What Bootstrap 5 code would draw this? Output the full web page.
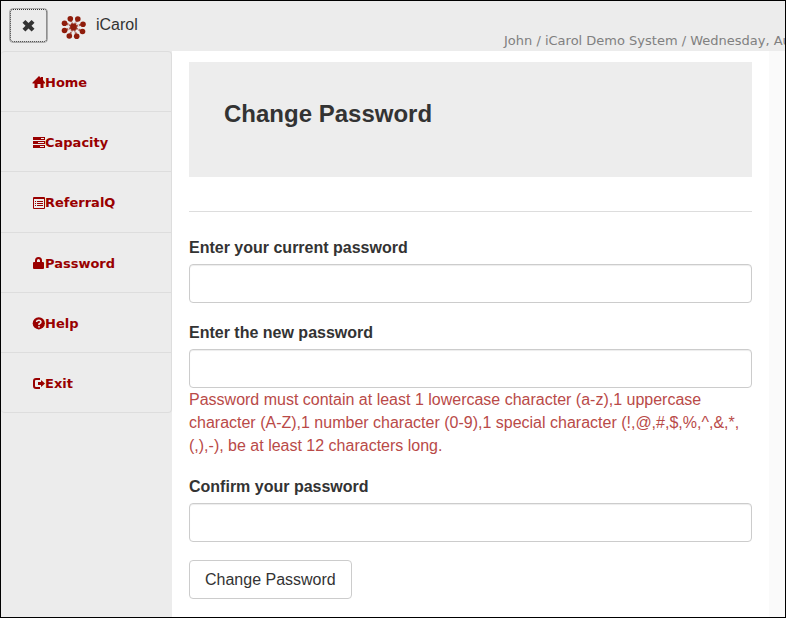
<!DOCTYPE html>
<html lang="en">
<head>
<meta charset="utf-8">
<meta name="viewport" content="width=device-width, initial-scale=1">
<title>iCarol - Change Password</title>
<link href="https://cdn.jsdelivr.net/npm/bootstrap@5.3.0/dist/css/bootstrap.min.css" rel="stylesheet">
<style>
body { font: 16px/23px "Liberation Sans", Arial, sans-serif; color: #333; background: #ececec; }
.app-shell { border: 1px solid #000; }
.top-bar { height: 50px; padding-left: 8px; }
.menu-toggle { width: 39px; height: 35px; margin-top: 7px; padding: 0; background: #ebebeb; border: 1px solid #adadad; border-radius: 4px; outline: 1px dotted #333; outline-offset: -2px; color: #333; }
.brand-link { color: #333; margin: 9px 0 0 13px; gap: 9px; }
.brand-name { line-height: 29px; }
.session-info { flex: 0 0 282px; min-width: 0; padding: 30px 0 0 1px; font: 13px/20px Verdana, "DejaVu Sans", sans-serif; color: #808080; }
.side-col { flex: 0 0 171px; }
.side-menu { --bs-list-group-bg: transparent; --bs-list-group-border-color: #ddd; --bs-list-group-border-radius: 4px; border-radius: 4px; }
.side-menu .list-group-item { height: 60px; padding: 2px 0 0 31px; border-left: 0; color: #900; font: bold 13px/20px Verdana, "DejaVu Sans", sans-serif; }
.side-menu .list-group-item:nth-child(-2n+3) { height: 61px; }
.side-menu svg { width: 13px; height: 13px; }
.main-col { padding: 11px 17px 18px; background: #fff; min-width: 0; }
.right-gutter { flex: 0 0 16px; background: #fafafa; }
.title-panel { background: #ededed; padding: 35px; height: 115px; }
.title-panel h1 { font-size: 24px; line-height: 34px; font-weight: bold; }
.rule-line { margin: 34px 0 24px; border-top: 1px solid #ddd; opacity: 1; }
.field-group { margin-bottom: 18px; }
.field-group label { font-weight: bold; margin-bottom: 5px; display: block; }
.field-group .form-control { height: 39px; border: 1px solid #ccc; border-radius: 4px; box-shadow: inset 0 1px 1px rgba(0,0,0,.075); }
.rule-text { color: #b94a48; }
.submit-btn { height: 39px; padding: 0 15px; border: 1px solid #ccc; border-radius: 4px; color: #333; background: #fff; }
</style>
<script src="https://cdn.jsdelivr.net/npm/bootstrap@5.3.0/dist/js/bootstrap.bundle.min.js" defer></script>
</head>
<body>
<div class="app-shell min-vh-100 d-flex flex-column overflow-hidden">
  <header class="top-bar d-flex align-items-start">
    <button type="button" class="menu-toggle d-flex align-items-center justify-content-center" aria-label="Close menu">
      <svg width="14" height="14" viewBox="0 0 14 14" aria-hidden="true"><path d="M3.400 1 6.500 4.100 9.600 1 12.500 3.800 9.500 6.700 12.500 9.700 9.600 12.500 6.500 9.400 3.400 12.500.500 9.700 3.500 6.700.500 3.800Z" fill="#333"/></svg>
    </button>
    <a href="#" class="brand-link d-flex text-decoration-none">
      <svg width="26" height="34" viewBox="0 0 26 34" aria-hidden="true">
        <g fill="#8f1d0c" stroke="#8f1d0c">
          <g stroke-width="2" stroke-dasharray="2 .8" opacity=".65"><path d="M12.500 17 9.300 9M12.500 17 16.800 9M12.500 17 22 14M12.500 17 21.500 21.500M12.500 17 15.700 26M12.500 17 8.300 26M12.500 17 3.500 20.500M12.500 17 4 13"/></g>
          <g stroke="none"><circle cx="12.500" cy="17" r="3.400"/><circle cx="9.300" cy="8.700" r="2.800"/><circle cx="16.800" cy="9" r="2.800"/><circle cx="22" cy="14.200" r="2.800"/><circle cx="21.500" cy="21.500" r="2.800"/><circle cx="15.700" cy="26.300" r="2.800"/><circle cx="8.300" cy="26" r="2.800"/><circle cx="3.500" cy="20.500" r="2.800"/><circle cx="3.500" cy="13.200" r="2.800"/></g>
        </g>
      </svg>
      <span class="brand-name">iCarol</span>
    </a>
    <div class="session-info ms-auto text-nowrap">John / iCarol Demo System / Wednesday, Au</div>
  </header>
  <div class="d-flex flex-grow-1">
    <nav class="side-col" aria-label="Main">
      <div class="side-menu list-group">
        <a href="#" class="list-group-item d-flex align-items-center"><svg viewBox="0 0 13 13" aria-hidden="true"><path d="M7 0 9 2V1h2v3l2 2.500V7.500H11.500V12H8.500V8H5.500v4H2.500V7.500H.5V6.500Z" fill="currentColor"/></svg>Home</a>
        <a href="#" class="list-group-item d-flex align-items-center"><svg viewBox="0 0 13 13" aria-hidden="true"><path d="M1 1h12v3H1zM1 5h12v3H1zM1 9h12v3H1z" fill="currentColor"/><path d="M9 2.500h3M6 6.500h6M8 10.500h4" stroke="#ececec"/></svg>Capacity</a>
        <a href="#" class="list-group-item d-flex align-items-center"><svg viewBox="0 0 13 13" aria-hidden="true"><path d="M1.500.500h11v11h-11z" fill="none" stroke="currentColor"/><path d="M1 1.500h12M3 4.500h1M5 4.500h6M3 6.500h1M5 6.500h6M3 8.500h1M5 8.500h6" stroke="currentColor"/></svg>ReferralQ</a>
        <a href="#" class="list-group-item d-flex align-items-center"><svg viewBox="0 0 13 13" aria-hidden="true"><path d="M4 6V3.500Q4 1 6.500 1T9 3.500V6" fill="none" stroke="currentColor" stroke-width="2"/><rect x="1" y="5" width="11" height="7" rx="1" fill="currentColor"/></svg>Password</a>
        <a href="#" class="list-group-item d-flex align-items-center"><svg viewBox="0 0 13 13" aria-hidden="true"><circle cx="6.800" cy="6.300" r="6.100" fill="currentColor"/><path d="M4.500 5Q4.700 3.200 6.800 3.200T9 5Q9 6 7 7V8M7 9v1.500" fill="none" stroke="#ececec" stroke-width="1.500"/></svg>Help</a>
        <a href="#" class="list-group-item d-flex align-items-center"><svg viewBox="0 0 13 13" aria-hidden="true"><path d="M8 2H4Q2 2 2 4v5Q2 11 4 11H8" fill="none" stroke="currentColor" stroke-width="2"/><path d="M6 5H9V3L13 6.500 9 10V8H6Z" fill="currentColor"/></svg>Exit</a>
      </div>
    </nav>
    <main class="main-col flex-grow-1">
      <div class="title-panel"><h1 class="m-0">Change Password</h1></div>
      <hr class="rule-line">
      <form>
        <div class="field-group">
          <label for="currentPassword">Enter your current password</label>
          <input type="password" class="form-control" id="currentPassword">
        </div>
        <div class="field-group">
          <label for="newPassword">Enter the new password</label>
          <input type="password" class="form-control" id="newPassword" aria-describedby="passwordRules">
          <div class="rule-text" id="passwordRules">Password must contain at least 1 lowercase character (a-z),1 uppercase character (A-Z),1 number character (0-9),1 special character (!,@,#,$,%,^,&amp;,*,(,),-), be at least 12 characters long.</div>
        </div>
        <div class="field-group">
          <label for="confirmPassword">Confirm your password</label>
          <input type="password" class="form-control" id="confirmPassword">
        </div>
        <button type="button" class="submit-btn btn">Change Password</button>
      </form>
    </main>
    <div class="right-gutter"></div>
  </div>
</div>
</body>
</html>
